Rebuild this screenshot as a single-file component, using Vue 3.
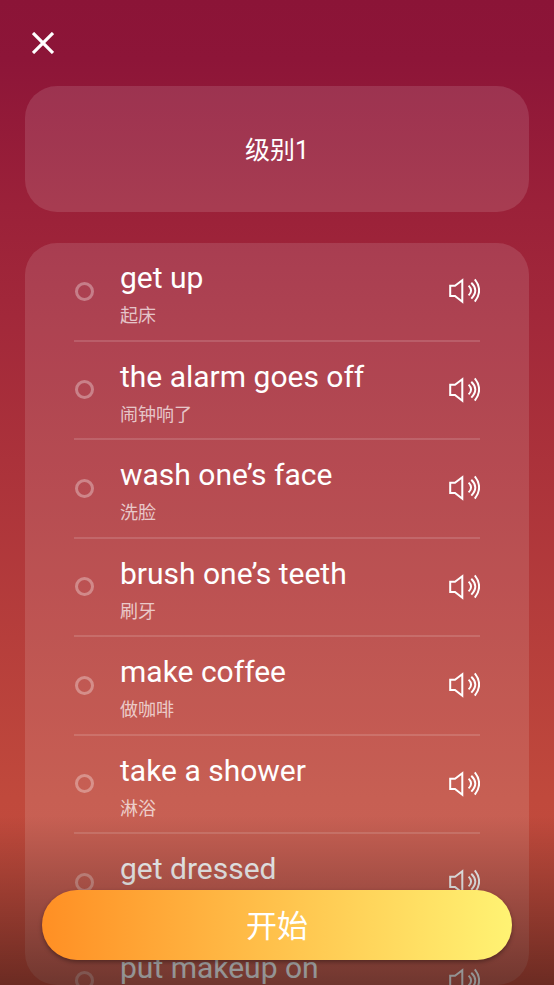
<script setup>
import { ref } from 'vue'

const words = ref([
  { text: 'get up', meaning: '起床', checked: false },
  { text: 'the alarm goes off', meaning: '闹钟响了', checked: false },
  { text: 'wash one’s face', meaning: '洗脸', checked: false },
  { text: 'brush one’s teeth', meaning: '刷牙', checked: false },
  { text: 'make coffee', meaning: '做咖啡', checked: false },
  { text: 'take a shower', meaning: '淋浴', checked: false },
  { text: 'get dressed', meaning: '', checked: false },
  { text: 'put makeup on', meaning: '', checked: false },
])
</script>

<template>
  <main class="page">
    <header class="bar">
      <button class="icon-button" type="button" aria-label="关闭">
        <svg width="22" height="22" viewBox="0 0 22 22" fill="none" stroke="#fff" stroke-width="3.2">
          <path d="M1 1 21 21M21 1 1 21" />
        </svg>
      </button>
    </header>

    <h1 class="card level">级别1</h1>

    <section class="card scroller">
      <ul class="words">
        <li v-for="(word, i) in words" :key="word.text" class="word">
          <input :id="`word-${i}`" v-model="word.checked" class="tick" type="checkbox" />
          <label class="label" :for="`word-${i}`">
            <span class="text">{{ word.text }}</span>
            <span class="meaning">{{ word.meaning }}</span>
          </label>
          <button class="icon-button" type="button" :aria-label="`播放 ${word.text}`">
            <svg width="32" height="26" viewBox="0 0 32 26" fill="none" stroke="#fff" stroke-width="2">
              <path d="M2.2 7.8H7L14.3 2.2V23.8L7 18H2.2Z" />
              <path d="M20.6 7.6Q25.6 12.4 20.6 17.4" />
              <path d="M23.3 4.8Q31.3 12.4 23.3 20.6" />
              <path d="M26.8 1.4Q35.4 12.4 26.8 23.6" />
            </svg>
          </button>
        </li>
      </ul>
    </section>

    <footer class="dock">
      <button class="start" type="button">开始</button>
    </footer>
  </main>
</template>

<style>
body {
  margin: 0;
}
</style>

<style scoped>
.page {
  position: relative;
  display: flex;
  flex-direction: column;
  box-sizing: border-box;
  height: 100vh;
  padding: 0 25px;
  overflow: hidden;
  color: #fff;
  font-family: Roboto, "Noto Sans CJK SC", sans-serif;
  background: linear-gradient(#8b1437 0%, #8d1538 6%, #9b2139 21%, #a2283a 32%, #c0493c 81%, #c44e3e 100%);
}

.bar {
  display: flex;
  align-items: center;
  height: 86px;
  padding: 0 7px;
  flex: none;
}

.icon-button {
  display: flex;
  padding: 0;
  border: 0;
  background: none;
  cursor: pointer;
}

.card {
  border-radius: 32px;
  background: rgba(255, 255, 255, 0.12);
}

.level {
  display: flex;
  align-items: center;
  justify-content: center;
  box-sizing: border-box;
  flex: none;
  height: 126px;
  margin: 0 0 31px;
  padding-bottom: 2px;
  font-size: 25px;
  font-weight: 400;
}

.scroller {
  flex: 1;
  min-height: 0;
  overflow-y: auto;
  scrollbar-width: none;
}

.words {
  display: grid;
  grid-auto-rows: 1fr;
  min-height: 788px;
  margin: 0;
  padding: 0 49px;
  list-style: none;
}

.word {
  display: flex;
  align-items: center;
  border-bottom: 2px solid rgba(255, 255, 255, 0.14);
}

.tick {
  appearance: none;
  flex: none;
  width: 19px;
  height: 19px;
  margin: 0 26px 0 1px;
  border: 3px solid rgba(255, 255, 255, 0.32);
  border-radius: 50%;
}

.tick:checked {
  background: #ffc24c;
}

.label {
  display: flex;
  flex: 1;
  flex-direction: column;
  gap: 8px;
  padding-top: 6px;
}

.text {
  font-size: 30px;
  line-height: 36px;
}

.meaning {
  min-height: 24px;
  color: rgba(255, 255, 255, 0.7);
  font-size: 18px;
  line-height: 24px;
}

.dock {
  position: absolute;
  inset: auto 0 0;
  display: flex;
  align-items: flex-end;
  box-sizing: border-box;
  height: 170px;
  padding: 0 42px 25px;
  background: linear-gradient(rgba(0, 0, 0, 0), rgba(0, 0, 0, 0.45));
  pointer-events: none;
}

.start {
  flex: 1;
  height: 70px;
  padding: 0 0 4px;
  border: 0;
  border-radius: 35px;
  color: #fff;
  font-family: inherit;
  font-size: 31px;
  background: linear-gradient(90deg, #ff8f24, #ffc24c 50%, #fff373);
  box-shadow: 0 2px 4px rgba(0, 0, 0, 0.35);
  pointer-events: auto;
  cursor: pointer;
}
</style>
